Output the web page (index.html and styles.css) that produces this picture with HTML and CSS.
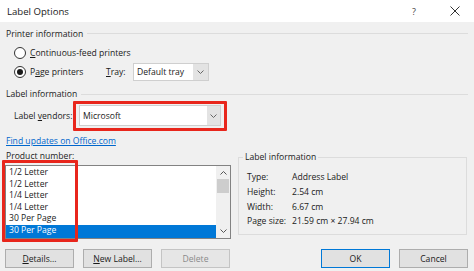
FILE: index.html
```html
<!DOCTYPE html>
<html lang="en">
<head>
    <meta charset="UTF-8">
    <title>Label Options</title>
    <link rel="stylesheet" href="styles.css">
</head>
<body>
    <div class="titlebar">
        <span class="title">Label Options</span>
        <span class="help">?</span>
        <svg class="close" width="10" height="10" viewBox="0 0 10 10"><path d="M0.5 0.5L9.5 9.5M9.5 0.5L0.5 9.5" stroke="#333" stroke-width="1"/></svg>
    </div>
    <div class="dialog">
        <div class="group-head">Printer information</div>
        <div class="row radio-row">
            <span class="radio"></span>
            <span><u>C</u>ontinuous-feed printers</span>
        </div>
        <div class="row radio-row page-row">
            <span class="radio checked"></span>
            <span class="page-label">P<u>a</u>ge printers</span>
            <span class="tray-label"><u>T</u>ray:</span>
            <div class="select tray-select">
                <span class="select-text">Default tray</span>
                <span class="select-btn"><svg width="7" height="4" viewBox="0 0 7 4"><path d="M0.5 0.5L3.5 3.5L6.5 0.5" fill="none" stroke="#666" stroke-width="1"/></svg></span>
            </div>
        </div>
        <div class="group-head second">Label information</div>
        <div class="row vendor-row">
            <span class="vendor-label">Label <u>v</u>endors:</span>
            <div class="select vendor-select">
                <span class="select-text">Microsoft</span>
                <span class="select-btn"><svg width="7" height="4" viewBox="0 0 7 4"><path d="M0.5 0.5L3.5 3.5L6.5 0.5" fill="none" stroke="#666" stroke-width="1"/></svg></span>
                <div class="mark vendor-mark"></div>
            </div>
        </div>
        <div class="link">Find updates on Office.com</div>
        <div class="product">
            <div class="product-left">
                <div class="product-label">Product n<u>u</u>mber:</div>
                <div class="listbox">
                    <div class="items">
                        <div class="item">1/2 Letter</div>
                        <div class="item">1/2 Letter</div>
                        <div class="item">1/4 Letter</div>
                        <div class="item">1/4 Letter</div>
                        <div class="item">30 Per Page</div>
                        <div class="item selected">30 Per Page</div>
                    </div>
                    <div class="scrollbar">
                        <svg class="arrow" width="7" height="4" viewBox="0 0 7 4"><path d="M0.5 3.5L3.5 0.5L6.5 3.5" fill="none" stroke="#555" stroke-width="1"/></svg>
                        <div class="thumb"></div>
                        <div class="track"></div>
                        <svg class="arrow" width="7" height="4" viewBox="0 0 7 4"><path d="M0.5 0.5L3.5 3.5L6.5 0.5" fill="none" stroke="#555" stroke-width="1"/></svg>
                    </div>
                    <div class="mark list-mark"></div>
                </div>
            </div>
            <div class="info-box">
                <span class="info-title">Label information</span>
                <div class="info-row"><span class="info-key">Type:</span><span>Address Label</span></div>
                <div class="info-row"><span class="info-key">Height:</span><span>2.54 cm</span></div>
                <div class="info-row"><span class="info-key">Width:</span><span>6.67 cm</span></div>
                <div class="info-row"><span class="info-key">Page size:</span><span>21.59 cm × 27.94 cm</span></div>
            </div>
        </div>
        <div class="buttons">
            <button><u>D</u>etails...</button>
            <button><u>N</u>ew Label...</button>
            <button class="disabled">Delete</button>
            <span class="spacer"></span>
            <button class="default">OK</button>
            <button>Cancel</button>
        </div>
    </div>
</body>
</html>
```

FILE: styles.css
```css
body {
    margin: 0;
    width: 474px;
    height: 271px;
    overflow: hidden;
    font-family: 'Open Sans', 'Noto Sans', sans-serif;
    font-size: 8.6px;
    color: #1a1a1a;
    background-color: #f0f0f0;
}
u {
    text-decoration-thickness: 1px;
    text-underline-offset: 1px;
}
.titlebar {
    height: 22px;
    background-color: #fff;
    display: flex;
    align-items: center;
    padding: 0 14px 0 7px;
}
.title {
    flex: 1;
    font-size: 9.6px;
}
.help {
    font-size: 9px;
    color: #444;
    margin-right: 34px;
}
.dialog {
    padding: 0 6px 0 5px;
}
.row {
    display: flex;
    align-items: center;
}
.group-head {
    height: 23px;
    display: flex;
    align-items: center;
    padding-left: 1px;
}
.group-head::after {
    content: '';
    flex: 1;
    height: 1px;
    background-color: #dcdcdc;
    margin-left: 4px;
}
.group-head.second {
    height: 22px;
}
.radio-row {
    height: 16px;
    padding-left: 9px;
}
.page-row {
    height: 22px;
}
.radio {
    width: 10px;
    height: 10px;
    border: 1px solid #333;
    border-radius: 50%;
    background-color: #fff;
    margin-right: 4px;
    display: flex;
    align-items: center;
    justify-content: center;
}
.radio.checked::after {
    content: '';
    width: 6px;
    height: 6px;
    border-radius: 50%;
    background-color: #1a1a1a;
}
.page-label {
    width: 76px;
}
.tray-label {
    width: 27px;
}
.select {
    display: flex;
    align-items: center;
    background-color: #fff;
    border: 1px solid #cfcfcf;
    box-sizing: border-box;
    position: relative;
}
.select-text {
    flex: 1;
    padding-left: 3px;
}
.select-btn {
    align-self: stretch;
    width: 15px;
    background-color: #e3e3e3;
    display: flex;
    align-items: center;
    justify-content: center;
}
.tray-select {
    width: 76px;
    height: 18px;
}
.vendor-row {
    height: 21px;
    padding-left: 9px;
}
.vendor-label {
    width: 65px;
}
.vendor-select {
    width: 142px;
    height: 21px;
}
.vendor-select .select-btn {
    width: 13px;
}
.mark {
    position: absolute;
    border: 3px solid #e8261c;
    border-radius: 1px;
}
.vendor-mark {
    left: -7px;
    right: -7px;
    top: -5px;
    bottom: -6px;
}
.link {
    margin-top: 8px;
    height: 14px;
    line-height: 14px;
    padding-left: 1px;
    color: #0066cc;
    text-decoration: underline;
    text-decoration-thickness: 1px;
}
.product {
    display: flex;
    align-items: flex-start;
}
.product-left {
    width: 226px;
}
.product-label {
    height: 17px;
    line-height: 16px;
    padding-left: 1px;
}
.listbox {
    height: 74px;
    background-color: #fff;
    border: 1px solid #828282;
    box-sizing: border-box;
    display: flex;
    position: relative;
}
.items {
    flex: 1;
    padding-top: 1px;
}
.item {
    height: 11.6px;
    line-height: 11.6px;
    padding-left: 3px;
}
.item.selected {
    background-color: #0078d7;
    color: #fff;
    margin-top: 0.4px;
    height: 12.6px;
}
.scrollbar {
    width: 14px;
    background-color: #f0f0f0;
    display: flex;
    flex-direction: column;
    align-items: center;
}
.arrow {
    margin: 5px 0;
}
.thumb {
    width: 12px;
    height: 14px;
    background-color: #cdcdcd;
    margin-top: -1px;
}
.track {
    flex: 1;
}
.list-mark {
    left: -4px;
    top: -6px;
    width: 70px;
    height: 76px;
}
.info-box {
    margin-left: 7px;
    margin-top: 9px;
    width: 229px;
    height: 78px;
    border: 1px solid #dcdcdc;
    box-sizing: border-box;
    position: relative;
    padding: 12px 0 0 8px;
}
.info-title {
    position: absolute;
    left: 4px;
    top: -7px;
    padding: 0 2px;
    background-color: #f0f0f0;
}
.info-row {
    display: flex;
    height: 14.7px;
    align-items: center;
}
.info-key {
    width: 45px;
}
.buttons {
    display: flex;
    margin-top: 10px;
    gap: 9px;
}
.spacer {
    flex: 1;
}
button {
    width: 69px;
    height: 19px;
    padding: 0;
    font-family: inherit;
    font-size: 8.6px;
    color: #1a1a1a;
    background-color: #e1e1e1;
    border: 1px solid #adadad;
}
button.disabled {
    color: #8a8a8a;
    background-color: #e6e6e6;
    border-color: #c4c4c4;
}
button.default {
    border: 1px solid #0078d7;
}
```
